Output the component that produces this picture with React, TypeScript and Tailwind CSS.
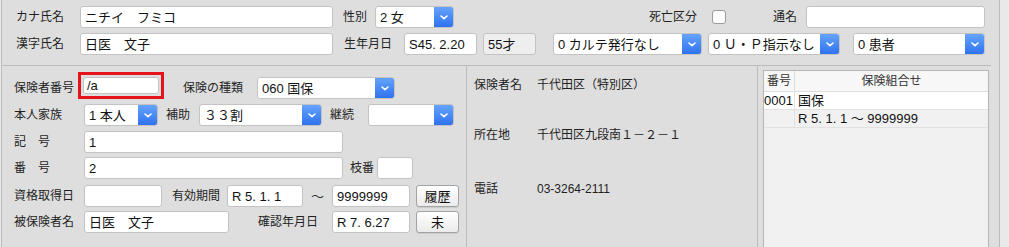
import React from 'react';

const font = "font-['Liberation_Sans','Noto_Sans_CJK_JP',sans-serif]";

const Label = ({ children, className = '' }: { children: React.ReactNode; className?: string }) => (
  <div className={`shrink-0 text-[12px] leading-none text-[#1f1f1f] ${className}`}>{children}</div>
);

const Field = ({ value = '', className = '' }: { value?: string; className?: string }) => (
  <div
    className={`shrink-0 h-[22px] flex items-center pl-[4px] bg-white border border-[#c3c3c3] rounded-[3px] text-[13px] leading-none text-[#111] whitespace-nowrap overflow-hidden ${className}`}
  >
    {value}
  </div>
);

const Chevron = () => (
  <svg width="8" height="5" viewBox="0 0 8 5" fill="none">
    <path d="M1 1l3 2.6L7 1" stroke="white" strokeWidth="1.6" strokeLinecap="round" strokeLinejoin="round" />
  </svg>
);

const Select = ({ value = '', className = '' }: { value?: string; className?: string }) => (
  <div className={`shrink-0 h-[22px] flex bg-white border border-[#c3c3c3] rounded-[3px] overflow-hidden ${className}`}>
    <div className="flex-1 flex items-center pl-[4px] text-[13px] leading-none text-[#111] whitespace-nowrap">{value}</div>
    <div className="w-[19px] flex items-center justify-center bg-gradient-to-b from-[#65a3fa] to-[#2f72ee]">
      <Chevron />
    </div>
  </div>
);

const Button = ({ children }: { children: React.ReactNode }) => (
  <div className="shrink-0 ml-[6px] w-[43px] h-[22px] flex items-center justify-center rounded-[3px] border border-[#a3a3a3] bg-gradient-to-b from-white to-[#ebebeb] text-[13px] leading-none text-[#111] shadow-[0_1px_0_rgba(0,0,0,0.08)]">
    {children}
  </div>
);

export default function App() {
  return (
    <div className={`w-[1009px] h-[247px] flex bg-[#e9e9e9] overflow-hidden ${font}`}>
      <div className="ml-[1px] w-[999px] h-full flex flex-col bg-[#dedede] border-l border-r border-[#bcbcbc]">
        {/* top: patient */}
        <div className="h-[65px] pl-[14px] pt-[6px] flex flex-col gap-[5px]">
          <div className="flex items-center h-[22px]">
            <Label className="w-[64px]">カナ氏名</Label>
            <Field value="ニチイ　フミコ" className="w-[253px]" />
            <Label className="ml-[10px] w-[32px]">性別</Label>
            <Select value="2 女" className="w-[79px]" />
            <Label className="w-[251px] text-right pr-[8px]">死亡区分</Label>
            <div className="ml-[7px] w-[14px] h-[14px] bg-white border border-[#9a9a9a] rounded-[3px]" />
            <Label className="w-[80px] text-right pr-[9px]">通名</Label>
            <Field className="w-[179px]" />
          </div>
          <div className="flex items-center h-[22px]">
            <Label className="w-[64px]">漢字氏名</Label>
            <Field value="日医　文子" className="w-[253px]" />
            <Label className="ml-[11px] w-[60px]">生年月日</Label>
            <Field value="S45. 2.20" className="w-[73px]" />
            <Field value="55才" className="ml-[6px] w-[53px] !bg-[#eeeeee]" />
            <Select value="0 カルテ発行なし" className="ml-[17px] w-[149px]" />
            <Select value="0 Ｕ・Ｐ指示なし" className="ml-[6px] w-[132px]" />
            <Select value="0 患者" className="ml-[13px] w-[132px]" />
          </div>
        </div>

        {/* bottom */}
        <div className="flex-1 flex">
          {/* insurance input */}
          <div className="w-[465px] border-t border-r border-[#bcbcbc] pl-[12px] pt-[11px] flex flex-col">
            <div className="flex items-center h-[22px]">
              <Label className="w-[64px]">保険者番号</Label>
              <div className="self-start -mt-[5px] w-[86px] h-[27px] border-[3px] border-[#e5141c] p-[2px]">
                <div className="h-full flex items-center pl-[3px] bg-white border border-[#c3c3c3] rounded-[3px] text-[13px] leading-none text-[#111]">
                  /a
                </div>
              </div>
              <Label className="ml-[19px] w-[74px]">保険の種類</Label>
              <Select value="060 国保" className="w-[138px]" />
            </div>
            <div className="mt-[5px] flex items-center h-[22px]">
              <Label className="w-[70px]">本人家族</Label>
              <Select value="1 本人" className="w-[74px]" />
              <Label className="ml-[8px] w-[33px]">補助</Label>
              <Select value="３３割" className="w-[123px]" />
              <Label className="ml-[8px] w-[38px]">継続</Label>
              <Select className="w-[86px]" />
            </div>
            <div className="mt-[5px] flex items-center h-[22px]">
              <Label className="w-[70px]">記　号</Label>
              <Field value="1" className="w-[259px]" />
            </div>
            <div className="mt-[4px] flex items-center h-[22px]">
              <Label className="w-[70px]">番　号</Label>
              <Field value="2" className="w-[259px]" />
              <Label className="ml-[7px] w-[27px]">枝番</Label>
              <Field className="w-[36px]" />
            </div>
            <div className="mt-[6px] flex items-center h-[22px]">
              <Label className="w-[70px]">資格取得日</Label>
              <Field className="w-[78px]" />
              <Label className="ml-[10px] w-[55px]">有効期間</Label>
              <Field value="R 5. 1. 1" className="w-[76px]" />
              <div className="w-[29px] text-center text-[13px] leading-none text-[#333]">～</div>
              <Field value="9999999" className="w-[78px]" />
              <Button>履歴</Button>
            </div>
            <div className="mt-[4px] flex items-center h-[22px]">
              <Label className="w-[70px]">被保険者名</Label>
              <Field value="日医　文子" className="w-[145px]" />
              <Label className="w-[103px] text-right pr-[14px]">確認年月日</Label>
              <Field value="R 7. 6.27" className="w-[78px]" />
              <Button>未</Button>
            </div>
          </div>

          {/* insurer info */}
          <div className="w-[291px] border-t border-r border-[#bcbcbc] pl-[7px] pt-[11px] flex flex-col text-[12px] leading-[16px] text-[#1f1f1f]">
            <div className="flex">
              <div className="w-[63px]">保険者名</div>
              <div>千代田区（特別区）</div>
            </div>
            <div className="mt-[34px] flex">
              <div className="w-[63px]">所在地</div>
              <div>千代田区九段南１－２－１</div>
            </div>
            <div className="mt-[38px] flex">
              <div className="w-[63px]">電話</div>
              <div>03-3264-2111</div>
            </div>
          </div>

          {/* combination list */}
          <div className="w-[233px] border-t border-[#bcbcbc] pl-[5px] pt-[4px] flex">
            <div className="w-[226px] h-full bg-[#f1f1f1] border border-[#b5b5b5] border-b-0 flex flex-col text-[#111]">
              <div className="h-[21px] flex bg-[#f7f7f7] border-b border-[#dddddd] text-[12px] leading-none text-[#333]">
                <div className="w-[31px] border-r border-[#dddddd] flex items-center justify-center">番号</div>
                <div className="flex-1 flex items-center justify-center">保険組合せ</div>
              </div>
              <div className="h-[18px] flex bg-white border-b border-[#e2e2e2] text-[13px] leading-none">
                <div className="w-[31px] border-r border-[#e2e2e2] flex items-center justify-end pr-[1px]">0001</div>
                <div className="flex-1 flex items-center pl-[3px]">国保</div>
              </div>
              <div className="h-[18px] flex bg-[#f1f1f1] border-b border-[#e2e2e2] text-[13px] leading-none">
                <div className="w-[31px] border-r border-[#e2e2e2]" />
                <div className="flex-1 flex items-center pl-[3px]">R 5. 1. 1 ～ 9999999</div>
              </div>
            </div>
          </div>
          <div className="flex-1" />
        </div>
      </div>
    </div>
  );
}
